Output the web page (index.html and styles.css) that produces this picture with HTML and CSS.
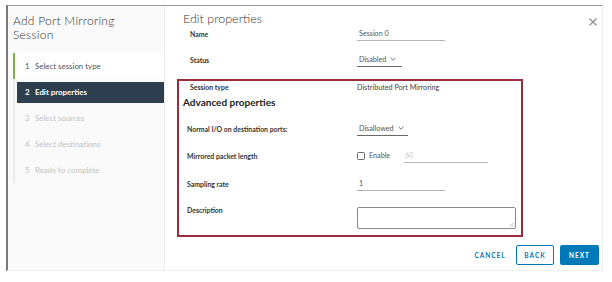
FILE: index.html
```html
<!DOCTYPE html>
<html>
<head>
<meta charset="utf-8">
<link rel="stylesheet" href="styles.css">
</head>
<body>
<div class="frame">
  <aside class="side">
    <div class="title">Add Port Mirroring<br>Session</div>
    <ol class="steps">
      <li class="step done"><span class="n">1</span>Select session type</li>
      <li class="step active"><span class="n">2</span>Edit properties</li>
      <li class="step todo"><span class="n">3</span>Select sources</li>
      <li class="step todo"><span class="n">4</span>Select destinations</li>
      <li class="step todo"><span class="n">5</span>Ready to complete</li>
    </ol>
  </aside>
  <main class="pane">
    <div class="head">
      <h1>Edit properties</h1>
      <svg class="close" width="8" height="8" viewBox="0 0 8 8"><path d="M0.5 0.5L7.5 7.5M7.5 0.5L0.5 7.5" stroke="#8a8a8a" stroke-width="1.1" fill="none"/></svg>
    </div>
    <div class="form">
      <div class="row r-name"><span class="lbl">Name</span><span class="field input w-name">Session 0</span></div>
      <div class="row r-status"><span class="lbl">Status</span><span class="field select w-status">Disabled<svg class="chev" width="6" height="4" viewBox="0 0 6 4"><path d="M0.5 0.8L3 3.2L5.5 0.8" stroke="#666" stroke-width="0.9" fill="none"/></svg></span></div>
      <div class="hl">
        <div class="row r-type"><span class="lbl">Session type</span><span class="val">Distributed Port Mirroring</span></div>
        <h2>Advanced properties</h2>
        <div class="row adv r-io"><span class="lbl">Normal I/O on destination ports:</span><span class="field select w-io">Disallowed<svg class="chev" width="6" height="4" viewBox="0 0 6 4"><path d="M0.5 0.8L3 3.2L5.5 0.8" stroke="#666" stroke-width="0.9" fill="none"/></svg></span></div>
        <div class="row adv r-mir"><span class="lbl">Mirrored packet length</span><span class="check"><span class="box"></span>Enable</span><span class="field input w-len dim">60</span></div>
        <div class="row adv r-rate"><span class="lbl">Sampling rate</span><span class="field input w-name">1</span></div>
        <div class="row adv r-desc"><span class="lbl">Description</span><span class="textarea"><svg class="grip" width="5" height="5" viewBox="0 0 5 5"><path d="M4.5 1L1 4.5M4.5 3L3 4.5" stroke="#999" stroke-width="0.7"/></svg></span></div>
      </div>
    </div>
    <div class="foot">
      <span class="btn flat">CANCEL</span>
      <span class="btn outline">BACK</span>
      <span class="btn solid">NEXT</span>
    </div>
  </main>
</div>
</body>
</html>
```

FILE: styles.css
```css
* { box-sizing: border-box; }
html, body { margin: 0; padding: 0; background: #fff; }
body {
  font-family: Lato, "Open Sans", sans-serif;
  color: #333;
}
.frame {
  margin: 5px 0 0 6px;
  width: 597px;
  height: 266px;
  display: flex;
  border-top: 1px solid #9c9c9c;
  border-left: 2px solid #7a7a7a;
  border-right: 1px solid #eeeeee;
  border-bottom: 1px solid #f0f0f0;
}
.side {
  width: 157px;
  flex: none;
  background: #fafafa;
  border-right: 1px solid #ececec;
  padding-top: 8px;
}
.title {
  padding-left: 5px;
  font-size: 12px;
  line-height: 14.4px;
  letter-spacing: 0.25px;
  font-weight: 300;
  color: #333;
}
.steps {
  list-style: none;
  margin: 10px 0 0 5px;
  padding: 0;
  border-left: 2px solid #ececec;
  font-size: 7.9px;
}
.step {
  display: flex;
  align-items: center;
  height: 26px;
  padding-left: 10px;
  color: #c2c2c2;
}
.step .n { width: 10px; }
.step.done {
  background: #fff;
  color: #555;
  margin-left: -2px;
  border-left: 2px solid #7cb342;
  padding-left: 10px;
}
.step.active {
  height: 21px;
  margin: 3px 0 2px 2px;
  padding-left: 8px;
  background: #2d3e4e;
  color: #fff;
  font-weight: 700;
}
.pane {
  flex: 1;
  display: flex;
  flex-direction: column;
}
.head {
  display: flex;
  justify-content: space-between;
  align-items: flex-start;
  margin-top: 6px;
  height: 14px;
  padding: 0 5px 0 18px;
}
h1 {
  margin: 0;
  font-size: 12.5px;
  line-height: 14px;
  font-weight: 300;
  color: #333;
}
.close { margin-top: 6px; }
.form {
  margin-left: 12px;
  width: 346px;
  font-size: 6.9px;
}
.row {
  display: flex;
  align-items: center;
  height: 15px;
  padding-left: 13px;
}
.lbl {
  width: 167px;
  flex: none;
  font-weight: 700;
  color: #333;
}
.r-status { margin-top: 11px; }
.field {
  display: flex;
  align-items: center;
  height: 15px;
  padding-left: 2px;
  color: #555;
  font-size: 7.2px;
}
.input { border-bottom: 1px solid #b5b5b5; }
.select { border-bottom: 1px solid #6a6a6a; }
.chev { margin-left: 4px; }
.w-name { width: 88px; }
.w-status { width: 45px; }
.w-io { width: 51px; }
.w-len { width: 84px; margin-left: 14px; padding-left: 1px; }
.dim { color: #c8c8c8; }
.hl {
  margin-top: 12px;
  border: 2px solid #9d2b3e;
  padding-bottom: 6px;
}
.r-type { height: 12px; padding-left: 11px; }
.val { font-size: 7.2px; color: #444; }
h2 {
  margin: 2px 0 0 0;
  padding-left: 4px;
  height: 14px;
  font-size: 10px;
  line-height: 14px;
  font-weight: 700;
  color: #222;
}
.adv { padding-left: 8px; }
.adv .lbl { width: 170px; }
.r-io { margin-top: 12px; }
.r-mir { margin-top: 12px; }
.r-rate { margin-top: 13px; }
.r-desc {
  margin-top: 12px;
  height: 26px;
  align-items: flex-start;
}
.r-desc .lbl { line-height: 14px; }
.check {
  display: flex;
  align-items: center;
  font-size: 7.2px;
  color: #555;
}
.box {
  width: 8px;
  height: 8px;
  border: 1px solid #666;
  border-radius: 1.5px;
  margin-right: 4px;
}
.textarea {
  position: relative;
  margin-top: 4px;
  width: 159px;
  height: 22px;
  border: 1px solid #8a8a8a;
  border-radius: 2px;
}
.grip { position: absolute; right: 1px; bottom: 1px; }
.foot {
  margin-top: 8px;
  display: flex;
  justify-content: flex-end;
  padding-right: 3px;
}
.btn {
  display: flex;
  align-items: center;
  justify-content: center;
  height: 20px;
  font-size: 6.5px;
  font-weight: 700;
  letter-spacing: 1px;
  border-radius: 2px;
}
.flat { width: 40px; color: #0079b8; margin-right: 6px; }
.outline { width: 38px; border: 1px solid #0079b8; color: #0079b8; margin-right: 6px; }
.solid { width: 39px; background: #0079b8; color: #fff; }
```
